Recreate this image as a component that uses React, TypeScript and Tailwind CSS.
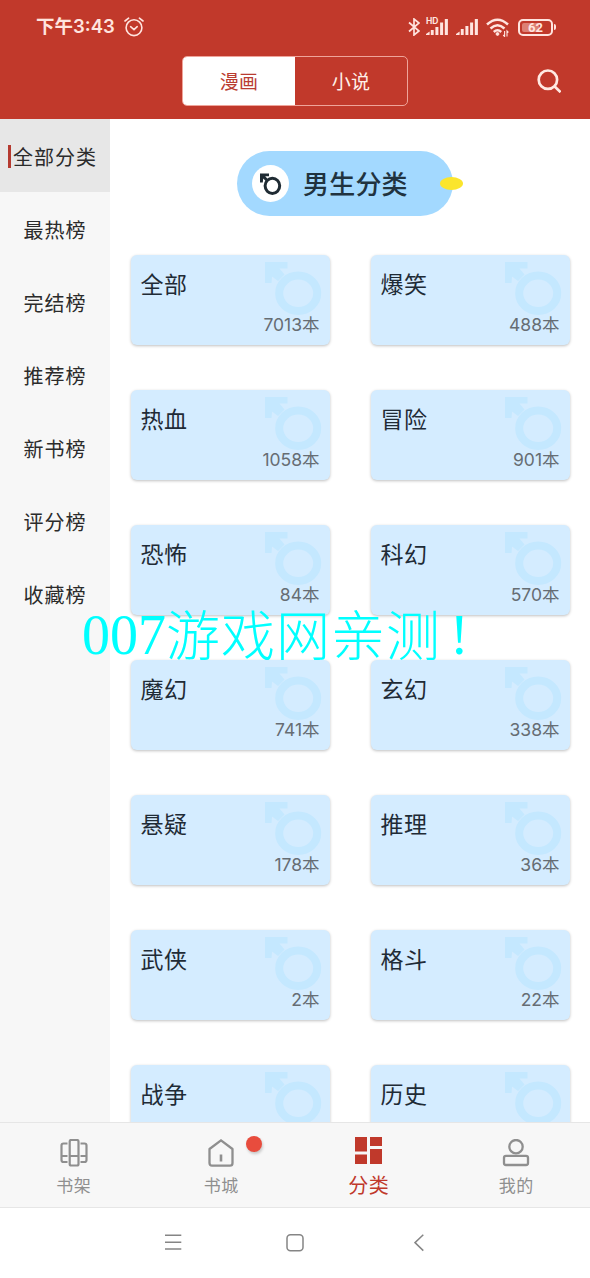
import { useState } from 'react';

interface Category {
  name: string;
  count: number;
}

const RANKS = ['全部分类', '最热榜', '完结榜', '推荐榜', '新书榜', '评分榜', '收藏榜'];

const CATEGORIES: Category[] = [
  { name: '全部', count: 7013 },
  { name: '爆笑', count: 488 },
  { name: '热血', count: 1058 },
  { name: '冒险', count: 901 },
  { name: '恐怖', count: 84 },
  { name: '科幻', count: 570 },
  { name: '魔幻', count: 741 },
  { name: '玄幻', count: 338 },
  { name: '悬疑', count: 178 },
  { name: '推理', count: 36 },
  { name: '武侠', count: 2 },
  { name: '格斗', count: 22 },
];

const PARTIAL_ROW = ['战争', '历史'];

function MaleIcon({ className }: { className: string }) {
  return (
    <svg viewBox="0 0 57 54" className={className}>
      <path d="M0 0H22.5V6.5H14.5L19.5 12.5L13 19L7 14.5L6.5 21H0Z" fill="currentColor" />
      <ellipse cx="33.2" cy="31.3" rx="19" ry="17.7" fill="none" stroke="currentColor" strokeWidth="8" />
    </svg>
  );
}

function MaleBadge() {
  return (
    <svg viewBox="0 0 37 37" className="h-[37px] w-[37px]">
      <circle cx="18.5" cy="18.5" r="18.5" fill="white" />
      <path d="M8 8.5H17V11.3H13.2L16 14.2L14 16.3L11.2 13.6L10.8 17.5H8Z" fill="#1f2b33" />
      <ellipse cx="20.4" cy="20.8" rx="7.3" ry="7.6" fill="none" stroke="#1f2b33" strokeWidth="3" />
    </svg>
  );
}

function SignalIcon() {
  return (
    <svg viewBox="0 0 22 16" className="h-4 w-[22px]" fill="currentColor">
      <path d="M0 15L3.6 12.5V16H0Z" />
      <rect x="4.8" y="10" width="2.9" height="6" />
      <rect x="9.4" y="7" width="3" height="9" />
      <rect x="14.1" y="3.5" width="3" height="12.5" />
      <rect x="18.8" y="0" width="3.1" height="16" />
    </svg>
  );
}

function StatusBar() {
  return (
    <div className="flex h-[54px] items-center pl-9 pr-[34px] text-[#ffe4df]">
      <span className="-mt-px font-['Inter','Noto_Sans_CJK_SC',sans-serif] text-[18.5px] font-semibold leading-none">下午3:43</span>
      <svg viewBox="0 0 20 20" className="ml-auto h-5 w-5" fill="none" stroke="currentColor" strokeWidth="1.6" strokeLinecap="round">
        <circle cx="10" cy="10.7" r="7.9" />
        <path d="M6.6 9.7L10 12.7L13.2 9.7M1 4L4.6 1.2M19 4L15.4 1.2" />
      </svg>
      <svg viewBox="0 0 12 18" className="ml-[264px] h-[18px] w-3" fill="none" stroke="currentColor" strokeWidth="1.7">
        <path d="M1 4.5L11 13L6 17V1L11 5L1 13.5" />
      </svg>
      <div className="relative ml-[6px]">
        <span className="absolute -top-[2px] left-0 font-['Inter',sans-serif] text-[8.5px] font-bold leading-none">HD</span>
        <svg viewBox="0 0 22 16" className="h-4 w-[22px]" fill="currentColor">
          <path d="M0 15L3.6 12.5V16H0Z" />
          <rect x="4.8" y="11" width="2.9" height="5" />
          <rect x="9.4" y="8" width="3" height="8" />
          <rect x="14.1" y="3.5" width="3" height="12.5" />
          <rect x="18.8" y="0" width="3.1" height="16" />
        </svg>
      </div>
      <div className="ml-2">
        <SignalIcon />
      </div>
      <svg viewBox="0 0 24 19" className="ml-2 h-[19px] w-6" fill="none" stroke="currentColor" strokeWidth="2.5">
        <path d="M1 6.5Q11.5 -3 22 6.5M4.5 10.5Q11.5 4 18.5 10.5M7.8 14Q11.5 10.5 15.2 14" />
        <circle cx="11.5" cy="16" r="1.4" fill="currentColor" strokeWidth="1" />
        <path d="M18.6 13V18.5L17.2 17M21 18.5V13L22.4 14.5" strokeWidth="1.1" />
      </svg>
      <div className="ml-[8px] flex items-center">
        <div className="relative flex h-[17px] w-[35px] items-center justify-center rounded-[5px] border-2 border-current">
          <span className="absolute left-[2px] top-[2px] h-[9px] w-[17px] rounded-[2px] bg-[#dd8074]" />
          <span className="relative font-['Roboto',sans-serif] text-[13px] font-bold leading-none">62</span>
        </div>
        <span className="ml-px h-1.5 w-0.5 rounded-r bg-current" />
      </div>
    </div>
  );
}

function Header() {
  return (
    <header className="h-[119px] bg-[#c1392b]">
      <StatusBar />
      <div className="grid grid-cols-[1fr_226px_1fr] items-center pt-0.5">
        <span />
        <div className="flex h-[50px] overflow-hidden rounded-[5px] border border-[#efa49a] text-[19px] tracking-[0.3px]">
          <button className="w-[112px] bg-white text-[#b93c31]">漫画</button>
          <button className="flex-1 text-[#fff0e8]">小说</button>
        </div>
        <svg viewBox="0 0 24 24" className="mr-[29px] h-6 w-6 justify-self-end text-[#ffe9e2]" fill="none" stroke="currentColor" strokeWidth="2.7">
          <circle cx="10.9" cy="10.7" r="9.2" />
          <path d="M17.4 17.3L23.6 23.2" />
        </svg>
      </div>
    </header>
  );
}

function CategoryCard({ name, count }: { name: string; count?: number }) {
  return (
    <div className="relative h-[90px] rounded-md bg-[#d4ecff] shadow-[0_1px_3px_rgba(0,0,0,0.25)]">
      <MaleIcon className="absolute left-[134px] top-[7px] h-[54px] w-[57px] text-[#c4e8ff]" />
      <div className="relative flex h-full flex-col justify-between pb-[10px] pl-[10px] pr-[10px] pt-4">
        <span className="text-[23px] leading-6 tracking-[0.5px] text-[#1f2b36]">{name}</span>
        {count !== undefined && (
          <span className="self-end font-['Inter','Noto_Sans_CJK_SC',sans-serif] text-[17.5px] leading-5 text-[#666d73]">
            {count}本
          </span>
        )}
      </div>
    </div>
  );
}

const TABS = [
  {
    label: '书架',
    icon: (
      <svg viewBox="0 0 28 28" className="h-7 w-7" fill="none" stroke="currentColor" strokeWidth="2.2">
        <rect x="9.7" y="1" width="8.8" height="25.5" rx="1.5" />
        <path d="M7.5 4.5H3.5Q1.5 4.5 1.5 6.5V21Q1.5 23 3.5 23H7.5M20.5 4.5H24.5Q26.5 4.5 26.5 6.5V21Q26.5 23 24.5 23H20.5M1.5 17H7.5M9.7 17H18.5M20.5 17H26.5" />
      </svg>
    ),
  },
  {
    label: '书城',
    icon: (
      <svg viewBox="0 0 28 28" className="h-7 w-7" fill="none" stroke="currentColor" strokeWidth="2.3" strokeLinejoin="round">
        <path d="M2.5 10L14 1.3L25.5 10V24Q25.5 26.7 23 26.7H5Q2.5 26.7 2.5 24Z" />
        <path d="M14 15.5V22.5" strokeWidth="2.6" />
      </svg>
    ),
  },
  {
    label: '分类',
    icon: (
      <svg viewBox="0 0 27 27" className="h-[27px] w-[27px]" fill="currentColor">
        <path d="M0 0H12V14.5H0ZM15 0H27V9H15ZM0 17.5H12V27H0ZM15 12H27V27H15Z" />
      </svg>
    ),
  },
  {
    label: '我的',
    icon: (
      <svg viewBox="0 0 28 28" className="h-7 w-7" fill="none" stroke="currentColor" strokeWidth="2.3">
        <circle cx="14" cy="7.7" r="6.7" />
        <rect x="2" y="16.8" width="24" height="9.2" rx="2" />
      </svg>
    ),
  },
];

export default function App() {
  const [rank, setRank] = useState(0);
  const [tab, setTab] = useState(2);

  return (
    <div className="relative flex h-[1278px] w-[590px] flex-col overflow-hidden bg-white font-['Noto_Sans_CJK_SC',sans-serif]">
      <Header />

      <div className="flex min-h-0 flex-1">
        <aside className="w-[110px] shrink-0 bg-[#f7f7f7] text-[20px] tracking-[1px] text-[#2b2b2b]">
          {RANKS.map((label, i) => (
            <button
              key={label}
              onClick={() => setRank(i)}
              className={`flex h-[73px] w-full items-center pt-0.5 ${i === rank ? 'bg-[#e7e7e7] pl-2' : 'justify-center'}`}
            >
              {i === rank && <span className="mr-[2px] h-[23px] w-[3px] bg-[#b53a30]" />}
              <span>{label}</span>
            </button>
          ))}
        </aside>

        <main className="min-w-0 flex-1 overflow-hidden">
          {/* Section title */}
          <div className="relative ml-[127px] mt-8 flex h-[65px] w-[216px] items-center rounded-full bg-[#a3d9ff] pl-[15px]">
            <MaleBadge />
            <h2 className="-mt-0.5 ml-[14px] text-[26px] font-medium tracking-[0.2px] text-[#21333f]">男生分类</h2>
            <span className="absolute left-[203px] top-[26px] h-[13px] w-[23px] rounded-[50%] bg-[#fbe52c]" />
          </div>

          <div className="mt-[39px] grid grid-cols-[199px_199px] gap-x-[41px] gap-y-[45px] pl-[20.5px]">
            {CATEGORIES.map((c) => (
              <CategoryCard key={c.name} {...c} />
            ))}
            {PARTIAL_ROW.map((name) => (
              <CategoryCard key={name} name={name} />
            ))}
          </div>
        </main>
      </div>

      {/* Tab bar */}
      <nav className="grid h-[86px] shrink-0 grid-cols-4 border-y border-[#e6e6e6] bg-[#f7f7f7]">
        {TABS.map((t, i) => (
          <button
            key={t.label}
            onClick={() => setTab(i)}
            className={`relative flex flex-col items-center ${i === tab ? 'pt-[14px] text-[#c0392b]' : 'pt-4 text-[#8f8f8f]'}`}
          >
            {t.icon}
            <span className={i === tab ? 'mt-[9px] text-[20px] leading-6 tracking-[0.5px]' : 'mt-1.5 text-[17px] leading-6 tracking-[0.5px]'}>
              {t.label}
            </span>
            {i === 1 && (
              <span className="absolute left-[98px] top-[13px] h-4 w-4 rounded-full bg-[#e84c3d] shadow-[1px_2px_3px_rgba(0,0,0,0.2)]" />
            )}
          </button>
        ))}
      </nav>

      {/* System navigation */}
      <div className="flex h-[70px] shrink-0 items-center bg-white pl-[164px] text-[#858585]">
        <svg viewBox="0 0 18 18" className="h-[18px] w-[18px]" fill="none" stroke="currentColor" strokeWidth="1.5">
          <path d="M1 1.3H17.3M1 8.2H17.3M1 15.1H17.3" />
        </svg>
        <svg viewBox="0 0 18 18" className="ml-[104px] h-[18px] w-[18px]" fill="none" stroke="currentColor" strokeWidth="1.5">
          <rect x="1" y="0.8" width="16" height="16" rx="3.5" />
        </svg>
        <svg viewBox="0 0 10 18" className="ml-[110px] h-[18px] w-2.5" fill="none" stroke="currentColor" strokeWidth="1.5">
          <path d="M9.3 0.8L1 8.6L9.3 16.6" />
        </svg>
      </div>

      <div className="pointer-events-none absolute left-[82px] top-[600px] flex h-[70px] items-center whitespace-nowrap leading-none text-[#00ffff]">
        <span className="font-['Liberation_Serif',serif] text-[56px]">007</span>
        <span className="-mt-[5px] text-[54px] font-light tracking-[1px]">游戏网亲测</span>
        <span className="ml-[9px] font-['Liberation_Serif',serif] text-[56px]">!</span>
      </div>
    </div>
  );
}
